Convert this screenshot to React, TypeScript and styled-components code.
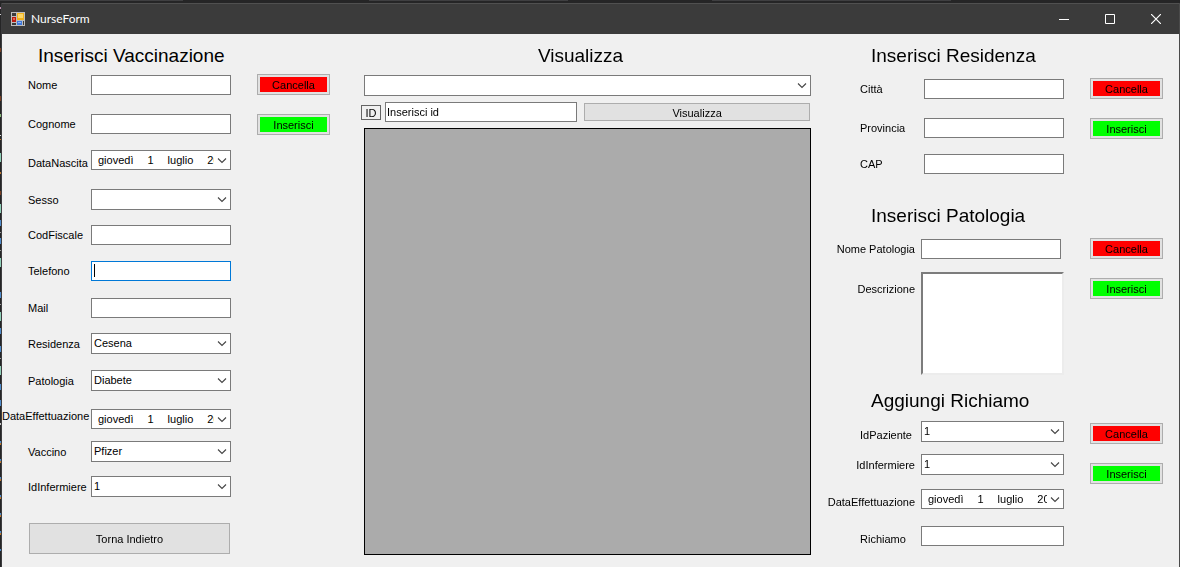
import React from 'react';
import styled, { createGlobalStyle, css } from 'styled-components';

const GlobalStyle = createGlobalStyle`
  *, *::before, *::after { box-sizing: border-box; }
  body {
    margin: 0;
    background: #1f1f20;
    color: #000;
    font-family: "Liberation Sans", Arial, sans-serif;
    font-size: 11px;
    line-height: 14px;
  }
  button, input, select, textarea { font: inherit; color: inherit; margin: 0; border-radius: 0; }
`;

const Desktop = styled.div`
  display: flex;
  min-height: 100vh;
  padding-top: 3px;
  background: linear-gradient(
    90deg,
    #3f3f41 183px, #252526 183px 369px, #3f3f41 369px 568px,
    #252526 568px 712px, #3f3f41 712px 951px, #252526 951px
  ) 0 0 / 100% 1px no-repeat #252526;
`;

const EditorEdge = styled.svg`
  flex: none;
  width: 2px;
  height: 564px;
`;

const Window = styled.div`
  flex: 1;
  display: flex;
  flex-direction: column;
  background: #f0f0f0;
  border-right: 1px solid #4a4a4a;
`;

const TitleBar = styled.header`
  display: flex;
  align-items: center;
  height: 31px;
  padding-left: 9px;
  background: #3b3b3b;
  border-top: 1px solid #505050;
  color: #fff;
`;

const AppTitle = styled.h1`
  flex: 1;
  margin: 0 0 0 6px;
  font: 400 12px/16px Lato, "Open Sans", sans-serif;
`;

const CaptionButton = styled.button`
  display: grid;
  place-items: center;
  width: 46px;
  height: 30px;
  padding: 0;
  border: 0;
  background: transparent;
  color: #fff;
`;

const Content = styled.main`
  flex: 1;
  display: flex;
  align-items: stretch;
`;

const LeftPanel = styled.div`
  flex: none;
  width: 359px;
  padding-top: 10px;
`;

const CenterPanel = styled.div`
  flex: 1;
  display: flex;
  flex-direction: column;
  padding: 10px 0 12px;
`;

const RightPanel = styled.div`
  flex: none;
  width: 348px;
  padding-top: 10px;
`;

const Heading = styled.h2<{ $indent?: number }>`
  margin: 0;
  padding-left: ${p => p.$indent ?? 0}px;
  font-size: 19px;
  font-weight: 400;
  line-height: 24px;
`;

const CenterHeading = styled(Heading)`
  padding-right: 31px;
  text-align: center;
`;

const FormBody = styled.div<{ $top: number; $height?: number }>`
  display: flex;
  gap: 26px;
  padding-top: ${p => p.$top}px;
  min-height: ${p => p.$height ?? 0}px;
`;

const Fields = styled.div<{ $width: number }>`
  width: ${p => p.$width}px;
  padding-top: 1px;
`;

const Row = styled.div<{ $pitch: number; $labelWidth: number; $align?: 'start' | 'center' | 'end' }>`
  display: grid;
  grid-template-columns: ${p => p.$labelWidth}px auto;
  justify-content: start;
  align-items: ${p => p.$align ?? 'center'};
  align-content: start;
  min-height: ${p => p.$pitch}px;
`;

const Label = styled.label<{ $side?: 'indent' | 'right' | 'full'; $indent: number }>`
  white-space: nowrap;
  ${p => p.$side === 'right'
    ? css`justify-self: end; padding-right: 6px;`
    : css`padding-left: ${p.$side === 'full' ? 0 : p.$indent}px;`}
`;

const boxed = css`
  border: 1px solid #7a7a7a;
  background: #fff;
  outline: 0;
`;

const TextBox = styled.input<{ $width?: number }>`
  ${boxed}
  width: ${p => p.$width ?? 140}px;
  height: 20px;
  padding: 0 2px 1px;
  &:focus { border-color: #0078d7; }
  &:focus:placeholder-shown {
    caret-color: transparent;
    background: linear-gradient(#000, #000) 2px 2px / 1px 13px no-repeat #fff;
  }
`;

const ComboFrame = styled.div<{ $width?: string }>`
  display: grid;
  grid-template-columns: minmax(0, 1fr);
  align-items: center;
  width: ${p => p.$width ?? '140px'};
  & > * { grid-area: 1 / 1; }
  & > svg { justify-self: end; margin-right: 4px; pointer-events: none; }
`;

const Select = styled.select`
  ${boxed}
  appearance: none;
  width: 100%;
  height: 21px;
  padding: 0 20px 1px 2px;
`;

const DateButton = styled.button`
  ${boxed}
  display: flex;
  gap: 14px;
  width: 100%;
  height: 20px;
  padding: 2px 16px 2px 6px;
  text-align: left;
  white-space: nowrap;
`;

const DateYear = styled.span`
  flex: 1;
  min-width: 0;
  overflow: hidden;
`;

const TextArea = styled.textarea`
  display: block;
  width: 143px;
  height: 103px;
  padding: 2px;
  border: 2px solid;
  border-color: #7c7c7c #ececec #ececec #7c7c7c;
  background: #fff;
  outline: 0;
  resize: none;
`;

const Actions = styled.div<{ $top?: number }>`
  display: flex;
  flex-direction: column;
  gap: 19px;
  padding-top: ${p => p.$top ?? 0}px;
`;

const ActionButton = styled.button<{ $fill: string }>`
  width: 73px;
  height: 21px;
  padding: 1px 0 0;
  border: 1px solid #adadad;
  background: ${p => p.$fill};
  box-shadow: inset 0 0 0 2px #e1e1e1;
  line-height: 14px;
`;

const PlainButton = styled.button`
  height: 18px;
  padding: 1px 0 0;
  border: 1px solid #adadad;
  background: #e1e1e1;
`;

const BackButton = styled(PlainButton)`
  width: 201px;
  height: 31px;
  margin-left: 27px;
`;

const ViewBody = styled.div`
  flex: 1;
  display: flex;
  flex-direction: column;
  margin: 7px 20px 0 3px;
`;

const SearchRow = styled.div`
  display: grid;
  grid-template-columns: 20px minmax(0, 194fr) minmax(0, 231fr);
  align-items: center;
  column-gap: 4px;
  margin: 6px 1px 6px -3px;
`;

const IdLabel = styled.label`
  height: 15px;
  border: 1px solid #646464;
  line-height: 14px;
  text-align: center;
`;

const SearchBox = styled(TextBox)`
  width: 100%;
  padding-left: 1px;
`;

const ViewButton = styled(PlainButton)`
  margin-left: 3px;
`;

const DataGrid = styled.div`
  flex: 1;
  min-height: 427px;
  border: 1px solid #000;
  background: #ababab;
`;

function Chevron() {
  return (
    <svg width="10" height="7" viewBox="0 0 10 7" fill="none" stroke="#444" strokeWidth="1.1" aria-hidden="true">
      <path d="M1 1.5 5 5.5 9 1.5" />
    </svg>
  );
}

function Combo({ id, value, width, label }: { id: string; value: string; width?: string; label?: string }) {
  return (
    <ComboFrame $width={width}>
      <Select id={id} defaultValue={value} aria-label={label}>
        <option>{value}</option>
      </Select>
      <Chevron />
    </ComboFrame>
  );
}

function DatePicker({ id, width }: { id: string; width?: string }) {
  return (
    <ComboFrame $width={width}>
      <DateButton id={id} type="button">
        <span>giovedì</span>
        <span>1</span>
        <span>luglio</span>
        <DateYear>2021</DateYear>
      </DateButton>
      <Chevron />
    </ComboFrame>
  );
}

function ActionPair({ top }: { top?: number }) {
  return (
    <Actions $top={top}>
      <ActionButton type="button" $fill="#ff0000">Cancella</ActionButton>
      <ActionButton type="button" $fill="#00ff00">Inserisci</ActionButton>
    </Actions>
  );
}

type FieldSpec = {
  id: string;
  label: string;
  kind: 'text' | 'combo' | 'date' | 'area';
  pitch: number;
  value?: string;
  width?: number;
  align?: 'start' | 'center' | 'end';
  side?: 'indent' | 'right' | 'full';
  focus?: boolean;
};

const vaccination: FieldSpec[] = [
  { id: 'nome', label: 'Nome', kind: 'text', pitch: 39 },
  { id: 'cognome', label: 'Cognome', kind: 'text', pitch: 36 },
  { id: 'nascita', label: 'DataNascita', kind: 'date', pitch: 39, align: 'end' },
  { id: 'sesso', label: 'Sesso', kind: 'combo', pitch: 36, value: '' },
  { id: 'codfiscale', label: 'CodFiscale', kind: 'text', pitch: 36 },
  { id: 'telefono', label: 'Telefono', kind: 'text', pitch: 37, focus: true },
  { id: 'mail', label: 'Mail', kind: 'text', pitch: 35 },
  { id: 'residenza', label: 'Residenza', kind: 'combo', pitch: 37, value: 'Cesena' },
  { id: 'patologia', label: 'Patologia', kind: 'combo', pitch: 39, value: 'Diabete' },
  { id: 'effettuazione', label: 'DataEffettuazione', kind: 'date', pitch: 32, align: 'start', side: 'full' },
  { id: 'vaccino', label: 'Vaccino', kind: 'combo', pitch: 35, value: 'Pfizer' },
  { id: 'infermiere', label: 'IdInfermiere', kind: 'combo', pitch: 47, value: '1' },
];

const residence: FieldSpec[] = [
  { id: 'citta', label: 'Città', kind: 'text', pitch: 39 },
  { id: 'provincia', label: 'Provincia', kind: 'text', pitch: 36 },
  { id: 'cap', label: 'CAP', kind: 'text', pitch: 36 },
];

const pathology: FieldSpec[] = [
  { id: 'nome-patologia', label: 'Nome Patologia', kind: 'text', pitch: 33, side: 'right' },
  { id: 'descrizione', label: 'Descrizione', kind: 'area', pitch: 103, side: 'right', align: 'start' },
];

const booster: FieldSpec[] = [
  { id: 'paziente', label: 'IdPaziente', kind: 'combo', pitch: 33, value: '1', width: 143, align: 'end' },
  { id: 'richiamo-infermiere', label: 'IdInfermiere', kind: 'combo', pitch: 35, value: '1', width: 143, side: 'right' },
  { id: 'richiamo-data', label: 'DataEffettuazione', kind: 'date', pitch: 37, width: 143, align: 'end', side: 'right' },
  { id: 'richiamo', label: 'Richiamo', kind: 'text', pitch: 20, width: 143, align: 'end' },
];

function FieldControl({ spec }: { spec: FieldSpec }) {
  const width = spec.width ? `${spec.width}px` : undefined;
  if (spec.kind === 'combo') return <Combo id={spec.id} value={spec.value ?? ''} width={width} />;
  if (spec.kind === 'date') return <DatePicker id={spec.id} width={width} />;
  if (spec.kind === 'area') return <TextArea id={spec.id} />;
  return <TextBox id={spec.id} type="text" placeholder=" " $width={spec.width} autoFocus={spec.focus} />;
}

const AreaLabel = styled(Label)`
  padding-top: 10px;
`;

type FieldListProps = { items: FieldSpec[]; labelWidth: number; indent: number; width: number };

function FieldList({ items, labelWidth, indent, width }: FieldListProps) {
  return (
    <Fields $width={width}>
      {items.map(spec => {
        const Caption = spec.kind === 'area' ? AreaLabel : Label;
        return (
          <Row key={spec.id} $pitch={spec.pitch} $labelWidth={labelWidth} $align={spec.align}>
            <Caption htmlFor={spec.id} $side={spec.side} $indent={indent}>{spec.label}</Caption>
            <FieldControl spec={spec} />
          </Row>
        );
      })}
    </Fields>
  );
}

function FormIcon() {
  return (
    <svg width="14" height="14" viewBox="0 0 14 14" aria-hidden="true">
      <rect width="14" height="14" fill="#bdbdbd" />
      <rect x="1" y="1" width="4" height="3" fill="#3b3b3b" />
      <rect x="1" y="5" width="4" height="5" fill="#b81a10" />
      <rect x="2" y="6" width="2" height="2" fill="#e8604c" />
      <rect x="1" y="11" width="4" height="2" fill="#3b3b3b" />
      <rect x="6" y="1" width="7" height="7" fill="#f0b01c" />
      <rect x="7" y="2" width="5" height="4" fill="#fcd667" />
      <rect x="6" y="9" width="5" height="4" fill="#3f78dc" />
      <rect x="7" y="10" width="3" height="1" fill="#8fb6f5" />
      <rect x="12" y="9" width="1" height="4" fill="#3b3b3b" />
    </svg>
  );
}

/* top, height and colour of each code fragment showing at the window's left */
const edgeMarks: [number, number, string][] = [
  [4, 2, '#b98fae'], [11, 1, '#d8d8d8'], [45, 4, '#7a3f22'], [93, 5, '#7a3f22'], [111, 3, '#88b878'],
  [132, 1, '#d8d8d8'], [136, 1, '#c07a30'], [150, 9, '#8fd0b8'], [169, 2, '#c07a30'], [188, 4, '#7a3f22'],
  [201, 9, '#8fd0b8'], [217, 6, '#4f8ccc'], [229, 1, '#9a9a9a'], [235, 6, '#4f8ccc'], [247, 1, '#9a9a9a'],
  [255, 9, '#8fd0b8'], [289, 6, '#4f8ccc'], [301, 1, '#9a9a9a'], [309, 9, '#8fd0b8'], [325, 6, '#4f8ccc'],
  [343, 6, '#4f8ccc'], [355, 1, '#9a9a9a'], [363, 9, '#8fd0b8'], [381, 6, '#4f8ccc'], [397, 6, '#4f8ccc'],
  [420, 2, '#c8c8c8'], [438, 2, '#4f8ccc'], [440, 2, '#c07a30'], [456, 2, '#4f8ccc'], [458, 2, '#c07a30'],
  [474, 2, '#4f8ccc'], [476, 2, '#c07a30'], [492, 2, '#4f8ccc'], [494, 2, '#c07a30'],
  [510, 2, '#4f8ccc'], [512, 2, '#c07a30'], [528, 2, '#4f8ccc'], [530, 2, '#c07a30'], [546, 2, '#4f8ccc'],
];

export default function App() {
  return (
    <>
      <GlobalStyle />
      <Desktop>
        <EditorEdge viewBox="0 0 2 564" aria-hidden="true">
          {edgeMarks.map(([y, height, fill]) => <rect key={y} y={y} width="1" height={height} fill={fill} />)}
          <rect x="1" width="1" height="564" fill="#3c3c3e" />
        </EditorEdge>
        <Window>
          <TitleBar>
            <FormIcon />
            <AppTitle>NurseForm</AppTitle>
            <CaptionButton type="button" aria-label="Riduci a icona">
              <svg width="10" height="10" stroke="#fff"><path d="M0 5.5H10" /></svg>
            </CaptionButton>
            <CaptionButton type="button" aria-label="Ingrandisci">
              <svg width="10" height="10" stroke="#fff" fill="none"><path d="M.5 .5H9.5V9.5H.5Z" /></svg>
            </CaptionButton>
            <CaptionButton type="button" aria-label="Chiudi">
              <svg width="10" height="10" stroke="#fff" strokeWidth="1.2"><path d="M0 0 10 10M10 0 0 10" /></svg>
            </CaptionButton>
          </TitleBar>
          <Content>
            <LeftPanel>
              <Heading $indent={36}>Inserisci Vaccinazione</Heading>
              <FormBody $top={6}>
                <FieldList items={vaccination} labelWidth={89} indent={26} width={229} />
                <ActionPair />
              </FormBody>
              <BackButton type="button">Torna Indietro</BackButton>
            </LeftPanel>
            <CenterPanel>
              <CenterHeading>Visualizza</CenterHeading>
              <ViewBody>
                <Combo id="tabella" value="" width="100%" label="Tabella" />
                <SearchRow>
                  <IdLabel htmlFor="id-ricerca">ID</IdLabel>
                  <SearchBox id="id-ricerca" type="text" defaultValue="Inserisci id" />
                  <ViewButton type="button">Visualizza</ViewButton>
                </SearchRow>
                <DataGrid />
              </ViewBody>
            </CenterPanel>
            <RightPanel>
              <Heading $indent={40}>Inserisci Residenza</Heading>
              <FormBody $top={10} $height={136}>
                <FieldList items={residence} labelWidth={93} indent={29} width={233} />
                <ActionPair />
              </FormBody>
              <Heading $indent={40}>Inserisci Patologia</Heading>
              <FormBody $top={10} $height={161}>
                <FieldList items={pathology} labelWidth={90} indent={29} width={233} />
                <ActionPair />
              </FormBody>
              <Heading $indent={40}>Aggiungi Richiamo</Heading>
              <FormBody $top={7}>
                <FieldList items={booster} labelWidth={90} indent={29} width={233} />
                <ActionPair top={3} />
              </FormBody>
            </RightPanel>
          </Content>
        </Window>
      </Desktop>
    </>
  );
}
